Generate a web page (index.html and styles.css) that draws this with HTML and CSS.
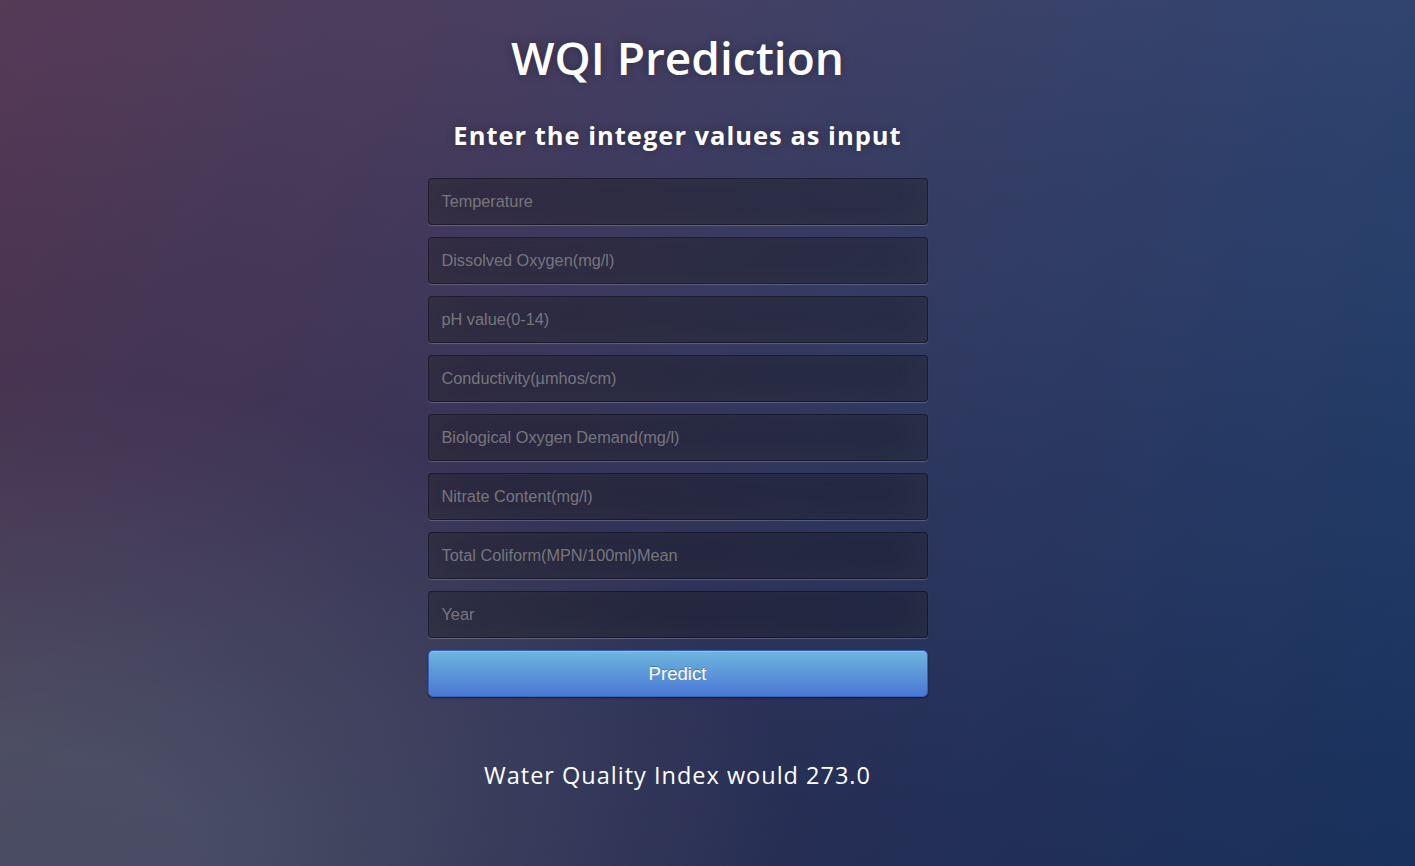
FILE: index.html
```html
<!DOCTYPE html>
<html>
<head>
<meta charset="utf-8">
<title>WQI Prediction</title>
<link rel="stylesheet" href="styles.css">
</head>
<body>
<main class="login">
  <h1 class="title">WQI Prediction</h1>
  <h2 class="subtitle">Enter the integer values as input</h2>
  <form class="form">
    <input class="field" type="text" placeholder="Temperature">
    <input class="field" type="text" placeholder="Dissolved Oxygen(mg/l)">
    <input class="field" type="text" placeholder="pH value(0-14)">
    <input class="field" type="text" placeholder="Conductivity(µmhos/cm)">
    <input class="field" type="text" placeholder="Biological Oxygen Demand(mg/l)">
    <input class="field" type="text" placeholder="Nitrate Content(mg/l)">
    <input class="field" type="text" placeholder="Total Coliform(MPN/100ml)Mean">
    <input class="field" type="text" placeholder="Year">
    <button class="btn" type="button">Predict</button>
  </form>
  <p class="result">Water Quality Index would 273.0</p>
</main>
</body>
</html>
```
FILE: styles.css
```css
* { box-sizing: border-box; }
html, body { margin: 0; height: 100%; }
body {
  font-family: "Open Sans", sans-serif;
  background-color: #092756;
  background-image:
    radial-gradient(ellipse farthest-corner at 0% 100%, rgba(104,128,138,.4) 10%, rgba(138,114,76,0) 40%),
    linear-gradient(to bottom, rgba(57,173,219,.25) 0%, rgba(42,60,87,.4) 100%),
    linear-gradient(135deg, #60142a 0%, #0b2960 100%);
  min-height: 866px;
}
.login {
  width: 500px;
  margin-left: calc(50% - 280px);
  padding-top: 28px;
  display: flex;
  flex-direction: column;
  align-items: stretch;
}
.title {
  margin: 0;
  color: #fff;
  font-size: 46px;
  font-weight: 600;
  text-align: center;
  line-height: 58px;
  text-shadow: 0 0 10px rgba(0,0,0,0.3);
}
.subtitle {
  margin: 30px 0 0;
  color: #fff;
  font-size: 25.5px;
  font-weight: 700;
  letter-spacing: 1px;
  text-align: center;
  line-height: 38px;
  text-shadow: 0 0 10px rgba(0,0,0,0.3);
}
.form {
  margin-top: 24px;
  display: flex;
  flex-direction: column;
  gap: 12px;
}
.field {
  width: 100%;
  height: 47px;
  padding: 0 13px;
  font-family: "Liberation Sans", Arial, sans-serif;
  font-size: 16.3px;
  color: #fff;
  background: rgba(0,0,0,0.3);
  border: 1px solid rgba(0,0,0,0.3);
  border-radius: 4px;
  outline: none;
  box-shadow: inset 0 -5px 45px rgba(100,100,100,0.2), 0 1px 1px rgba(255,255,255,0.2);
}
.field::placeholder { color: #77767d; opacity: 1; }
.btn {
  width: 100%;
  height: 47px;
  font-family: "Liberation Sans", Arial, sans-serif;
  font-size: 18.6px;
  color: #fff;
  text-shadow: 0 -1px 0 rgba(0,0,0,0.25);
  background-color: #4a77d4;
  background-image: linear-gradient(to bottom, #6eb6de, #4a77d4);
  border: 1px solid #3762bc;
  border-radius: 5px;
  box-shadow: inset 0 1px 0 rgba(255,255,255,0.2), 0 1px 2px rgba(0,0,0,0.5);
  cursor: pointer;
}
.result {
  margin: 62px 0 0;
  color: #fff;
  font-size: 23.5px;
  letter-spacing: 1px;
  text-align: center;
}
```
